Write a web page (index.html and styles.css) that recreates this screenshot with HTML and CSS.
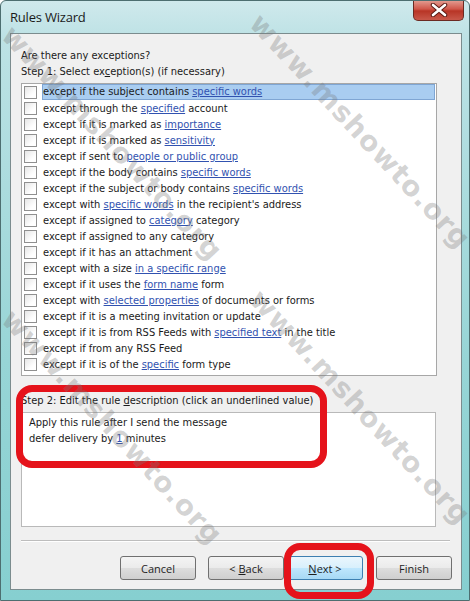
FILE: index.html
```html
<!DOCTYPE html>
<html>
<head>
<meta charset="utf-8">
<link rel="stylesheet" href="styles.css">
</head>
<body>
<div class="window">
  <div class="titlebar">
    <div class="title">Rules Wizard</div>
    <div class="close"><svg width="18" height="14" viewBox="0 0 18 14"><path d="M3 2 L15 12 M15 2 L3 12" stroke="#5a1a14" stroke-width="4.5" stroke-linecap="round"/><path d="M3 2 L15 12 M15 2 L3 12" stroke="#fff" stroke-width="2.6" stroke-linecap="round"/></svg></div>
  </div>
  <div class="client">
    <div class="label">Are there any exceptions?</div>
    <div class="label">Step 1: Select ex<u>c</u>eption(s) (if necessary)</div>
    <div class="listbox">
      <div class="row"><span class="cb"></span><span class="txt sel">except if the subject contains <a>specific words</a></span></div>
      <div class="row"><span class="cb"></span><span class="txt">except through the <a>specified</a> account</span></div>
      <div class="row"><span class="cb"></span><span class="txt">except if it is marked as <a>importance</a></span></div>
      <div class="row"><span class="cb"></span><span class="txt">except if it is marked as <a>sensitivity</a></span></div>
      <div class="row"><span class="cb"></span><span class="txt">except if sent to <a>people or public group</a></span></div>
      <div class="row"><span class="cb"></span><span class="txt">except if the body contains <a>specific words</a></span></div>
      <div class="row"><span class="cb"></span><span class="txt">except if the subject or body contains <a>specific words</a></span></div>
      <div class="row"><span class="cb"></span><span class="txt">except with <a>specific words</a> in the recipient's address</span></div>
      <div class="row"><span class="cb"></span><span class="txt">except if assigned to <a>category</a> category</span></div>
      <div class="row"><span class="cb"></span><span class="txt">except if assigned to any category</span></div>
      <div class="row"><span class="cb"></span><span class="txt">except if it has an attachment</span></div>
      <div class="row"><span class="cb"></span><span class="txt">except with a size <a>in a specific range</a></span></div>
      <div class="row"><span class="cb"></span><span class="txt">except if it uses the <a>form name</a> form</span></div>
      <div class="row"><span class="cb"></span><span class="txt">except with <a>selected properties</a> of documents or forms</span></div>
      <div class="row"><span class="cb"></span><span class="txt">except if it is a meeting invitation or update</span></div>
      <div class="row"><span class="cb"></span><span class="txt">except if it is from RSS Feeds with <a>specified text</a> in the title</span></div>
      <div class="row"><span class="cb"></span><span class="txt">except if from any RSS Feed</span></div>
      <div class="row"><span class="cb"></span><span class="txt">except if it is of the <a>specific</a> form type</span></div>
    </div>
    <div class="label step2">Step 2: Edit the rule <u>d</u>escription (click an underlined value)</div>
    <div class="desc">
      <div>Apply this rule after I send the message</div>
      <div>defer delivery by <a>1</a> minutes</div>
    </div>
    <div class="sep"></div>
    <div class="buttons">
      <div class="btn"><span>Cancel</span></div>
      <div class="btn back"><span>&lt; <u>B</u>ack</span></div>
      <div class="btn next"><span><u>N</u>ext &gt;</span></div>
      <div class="btn finish"><span>Finish</span></div>
    </div>
  </div>
  <div class="mark mark1"></div>
  <div class="mark mark2"></div>
  <div class="wm wm1">www.mshowto.org</div>
  <div class="wm wm2">www.mshowto.org</div>
  <div class="wm wm3">www.mshowto.org</div>
  <div class="wm wm4">www.mshowto.org</div>
</div>
</body>
</html>
```

FILE: styles.css
```css
html, body {
  margin: 0;
  padding: 0;
}
body {
  width: 470px;
  height: 601px;
  overflow: hidden;
  background: #ffffff;
}
.window {
  position: relative;
  width: 470px;
  height: 601px;
  box-sizing: border-box;
  background: linear-gradient(180deg, #cfe9ec 0%, #bde2e5 6%, #97d5d6 60%, #86cfd0 100%);
  border: 1px solid #4d6e70;
  border-radius: 6px 6px 0 0;
  padding: 0 7px 10px 9px;
  display: flex;
  flex-direction: column;
  overflow: hidden;
  font-family: "DejaVu Sans Condensed", "DejaVu Sans", sans-serif;
}
.titlebar {
  height: 32px;
  display: flex;
  justify-content: space-between;
  align-items: flex-start;
  flex: none;
}
.title {
  font-family: "Open Sans", sans-serif;
  font-size: 13px;
  letter-spacing: -0.2px;
  color: #1a1a1a;
  margin-top: 7px;
}
.close {
  width: 51px;
  height: 21px;
  margin-right: -2px;
  margin-top: -1px;
  box-sizing: border-box;
  border: 1px solid #6b2a22;
  border-top: none;
  border-radius: 0 0 5px 5px;
  background: linear-gradient(180deg, #e4a196 0%, #d0574a 45%, #b83526 55%, #c8584a 100%);
  display: flex;
  align-items: center;
  justify-content: center;
}
.client {
  flex: 1;
  background: #f0f0f0;
  border: 1px solid #7b8c8e;
  padding: 14px 11px 0 10px;
  display: flex;
  flex-direction: column;
  font-size: 11px;
  color: #1a1a1a;
}
.label {
  height: 16px;
  line-height: 16px;
  white-space: nowrap;
}
.listbox {
  margin-top: 3px;
  width: 416px;
  box-sizing: border-box;
  height: 293px;
  background: #fff;
  border: 1px solid #a7a7a7;
  padding: 0 0 0 2px;
}
.row {
  height: 16px;
  display: flex;
  align-items: center;
}
.cb {
  width: 13px;
  height: 13px;
  box-sizing: border-box;
  border: 1px solid #8f8f8f;
  background: linear-gradient(135deg, #e6e6e6, #fff 70%);
  margin-right: 5px;
  flex: none;
}
.txt {
  line-height: 15px;
  height: 15px;
  padding: 0 1px;
  white-space: nowrap;
}
.txt.sel {
  flex: 1;
  background: #a9cdf1;
  border: 1px solid #7fa6d4;
  margin-right: 1px;
  height: 14px;
  line-height: 14px;
  padding: 0 1px 0 0;
}
a {
  color: #3152b0;
  text-decoration: underline;
}
.step2 {
  margin-top: 17px;
}
.desc {
  margin-top: 3px;
  width: 415px;
  height: 115px;
  box-sizing: border-box;
  background: #fff;
  border: 1px solid #b9b9b9;
  padding: 2px 7px;
  line-height: 16px;
}
.sep {
  height: 0;
  border-top: 1px solid #bdbdbd;
  border-bottom: 1px solid #fff;
  margin-top: 13px;
}
.buttons {
  display: flex;
  justify-content: flex-end;
  margin-top: 14px;
  margin-right: -2px;
}
.btn {
  width: 76px;
  height: 24px;
  box-sizing: border-box;
  border: 1px solid #707070;
  border-radius: 3px;
  background: linear-gradient(180deg, #f4f4f4 0%, #ebebeb 48%, #dddddd 52%, #cfcfcf 100%);
  display: flex;
  align-items: center;
  justify-content: center;
  margin-left: 12px;
  font-family: "Open Sans", sans-serif;
  font-size: 11px;
  color: #1e1e1e;
}
.btn.next {
  margin-left: 3px;
  border-color: #3c7fb1;
  background: linear-gradient(180deg, #eaf6fd 0%, #d9f0fc 48%, #bee6fd 52%, #a7d9f5 100%);
}
.btn.finish {
  margin-left: 13px;
}
.mark {
  position: absolute;
  border: 7px solid #e5131b;
  border-radius: 16px;
  box-sizing: border-box;
}
.mark1 {
  left: 15px;
  top: 384px;
  width: 311px;
  height: 83px;
}
.mark2 {
  left: 283px;
  top: 542px;
  width: 90px;
  height: 56px;
}
.wm {
  position: absolute;
  font-family: "DejaVu Sans", sans-serif;
  font-weight: bold;
  font-size: 28px;
  color: rgba(120, 120, 120, 0.33);
  white-space: nowrap;
  transform: rotate(47deg);
  transform-origin: 0 0;
  letter-spacing: 1px;
}
.wm1 { left: 266px; top: 6px; }
.wm2 { left: 18px; top: 18px; }
.wm3 { left: 266px; top: 282px; }
.wm4 { left: 18px; top: 302px; }
```
